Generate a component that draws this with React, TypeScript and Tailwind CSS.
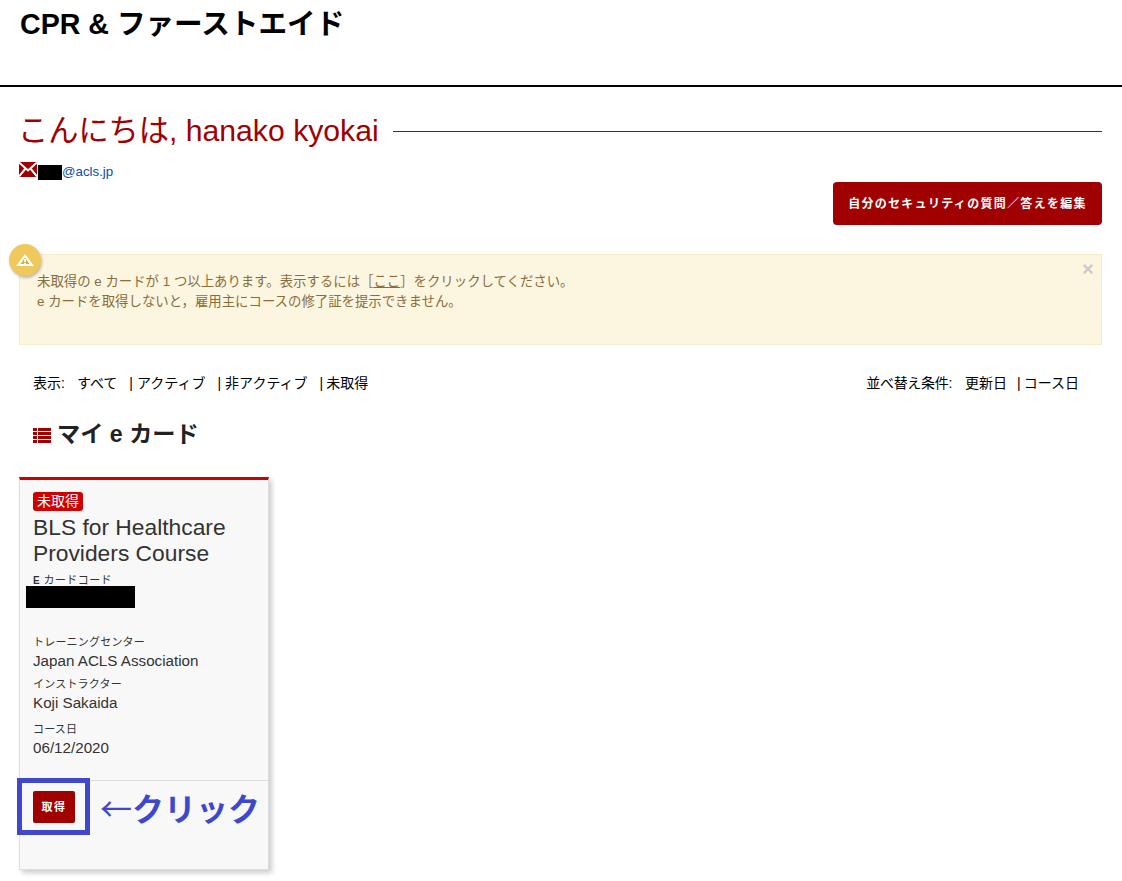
import { FaTimes } from 'react-icons/fa';

const JP_FONT = "font-['Liberation_Sans','Noto_Sans_CJK_JP',sans-serif]";

function MailIcon() {
  return (
    <svg width="18" height="15" viewBox="0 0 18 15" className="block mt-px">
      <rect width="18" height="15" fill="#a00000" />
      <path d="M0 0.5 L9 8.5 L18 0.5 M0 14.5 L6.5 6.5 M18 14.5 L11.5 6.5" stroke="#fff" strokeWidth="2" fill="none" />
    </svg>
  );
}

function ListIcon() {
  return (
    <svg width="18" height="15" viewBox="0 0 18 15" className="block mt-[3px]">
      <g fill="#a00000">
        <rect x="0" y="0" width="4" height="3" />
        <rect x="5" y="0" width="13" height="3" />
        <rect x="0" y="4" width="4" height="3" />
        <rect x="5" y="4" width="13" height="3" />
        <rect x="0" y="8" width="4" height="3" />
        <rect x="5" y="8" width="13" height="3" />
        <rect x="0" y="12" width="4" height="3" />
        <rect x="5" y="12" width="13" height="3" />
      </g>
    </svg>
  );
}

function WarningBadge() {
  return (
    <div className="absolute left-[-11px] top-[-11px] w-[32px] h-[32px] rounded-full bg-[#f0c95c] shadow-[1px_2px_3px_rgba(0,0,0,0.25)] flex items-center justify-center">
      <svg width="18" height="12" viewBox="0 0 18 12">
        <path d="M9 0 L18 12 H0 Z" fill="#fff" />
        <path d="M9 3.5 L13.5 10 H4.5 Z" fill="#d9b04a" />
        <rect x="8" y="5" width="2" height="3" fill="#fff" />
        <rect x="8" y="9" width="2" height="1" fill="#fff" />
      </svg>
    </div>
  );
}

function CardField({ label, value, className }: { label: string; value: string; className?: string }) {
  return (
    <div className={className}>
      <div className="text-[11px] leading-[14px] tracking-[0.2px] text-[#333]">{label}</div>
      <div className="text-[15.2px] leading-[24px] text-[#333]">{value}</div>
    </div>
  );
}

function ECard() {
  return (
    <div className="relative w-[250px] h-[393px] bg-[#f8f8f8] border border-[#ddd] border-t-[3px] border-t-[#cc0000] shadow-[3px_3px_5px_rgba(0,0,0,0.2)]">
      <div className="px-[13px] pt-[12px]">
        <span className="block w-fit bg-[#d00000] text-white text-[14px] leading-[19px] px-[4px] rounded-[3px]">未取得</span>
        <h2 className="text-[22.8px] leading-[26px] text-[#333] mt-[3px]">BLS for Healthcare Providers Course</h2>
        <div className="text-[11px] leading-[12px] text-[#333] mt-[8px] tracking-[0.4px] whitespace-pre">
          <span className="text-[10px] font-bold">E</span> カードコード
        </div>
        <div className="w-[109px] h-[22px] bg-black ml-[-7px] mt-[-1px]" />
        <CardField className="mt-[27px]" label="トレーニングセンター" value="Japan ACLS Association" />
        <CardField className="mt-[4px]" label="インストラクター" value="Koji Sakaida" />
        <CardField className="mt-[7px]" label="コース日" value="06/12/2020" />
      </div>
      <div className="border-t border-[#ddd] mt-[20px] px-[13px] pt-[10px]">
        <button className="block w-[42px] h-[32px] bg-[#a00000] rounded-[2px] text-white text-[11px] font-bold tracking-[1.5px]">取得</button>
      </div>
      {/* annotation drawn over the screenshot */}
      <div className="absolute left-[-3px] top-[298px] w-[73px] h-[57px] border-[5px] border-[#3f48cc]" />
      <div className="absolute left-[80px] top-[305px] text-[#3f48cc] text-[32px] leading-[44px] font-bold whitespace-nowrap">
        <span className="font-normal font-['Noto_Sans_CJK_JP']">←</span>クリック
      </div>
    </div>
  );
}

export default function App() {
  return (
    <div className={`relative w-full h-[881px] overflow-hidden bg-white text-black ${JP_FONT}`}>
      <header className="h-[87px] border-b-2 border-black px-5 pt-[6px]">
        <h1 className="text-[28.6px] leading-[36px] font-bold">CPR &amp; ファーストエイド</h1>
      </header>

      <main className="pl-[19px] pr-5">
        <div className="flex items-center gap-[14px] mt-[22px] ml-[-1px]">
          <div className="text-[30.2px] leading-[44px] text-[#a00000] whitespace-nowrap">こんにちは, hanako kyokai</div>
          <div className="flex-1 h-px bg-[#8b0f0f]" />
        </div>

        <div className="flex items-start mt-[8px] h-[20px]">
          <MailIcon />
          <span className="w-[24px] h-[15px] ml-px bg-black mt-[4px]" />
          <span className="text-[13.3px] leading-[22px] text-[#0b4ea2]">@acls.jp</span>
        </div>

        <div className="flex justify-end mt-[1px]">
          <button className="w-[269px] h-[43px] bg-[#a00000] rounded-[4px] text-white text-[12px] font-bold tracking-[1.3px]">
            自分のセキュリティの質問／答えを編集
          </button>
        </div>

        <div className="relative mt-[29px] h-[91px] bg-[#fcf6e1] border border-[#f8ecca] pl-[17px] pt-[17px] text-[13.4px] leading-[20px] text-[#8a6d3b]">
          <WarningBadge />
          <p>未取得の e カードが 1 つ以上あります。表示するには［<span className="underline">ここ</span>］をクリックしてください。</p>
          <p>e カードを取得しないと，雇用主にコースの修了証を提示できません。</p>
          <FaTimes className="absolute right-[6px] top-[7px] text-[#ccc] text-[14px]" />
        </div>

        <div className="flex justify-between pl-[14px] pr-[23px] mt-[28px] text-[14px] leading-[20px]">
          <div className="flex whitespace-nowrap">
            <span>表示:</span>
            <span className="ml-[12px]">すべて</span>
            <span className="ml-[12px]">|</span>
            <span className="ml-[4px]">アクティブ</span>
            <span className="ml-[12px]">|</span>
            <span className="ml-[4px]">非アクティブ</span>
            <span className="ml-[12px]">|</span>
            <span className="ml-[3px]">未取得</span>
          </div>
          <div className="flex whitespace-nowrap">
            <span className="tracking-[-0.3px]">並べ替え条件:</span>
            <span className="ml-[13px]">更新日</span>
            <span className="ml-[10px]">|</span>
            <span className="ml-[3px]">コース日</span>
          </div>
        </div>

        <div className="flex items-center gap-[6px] pl-[14px] mt-[25px] h-[32px]">
          <ListIcon />
          <h3 className="text-[23.2px] leading-[32px] font-bold text-[#222]">マイ e カード</h3>
        </div>

        <div className="mt-[27px]">
          <ECard />
        </div>
      </main>
    </div>
  );
}
